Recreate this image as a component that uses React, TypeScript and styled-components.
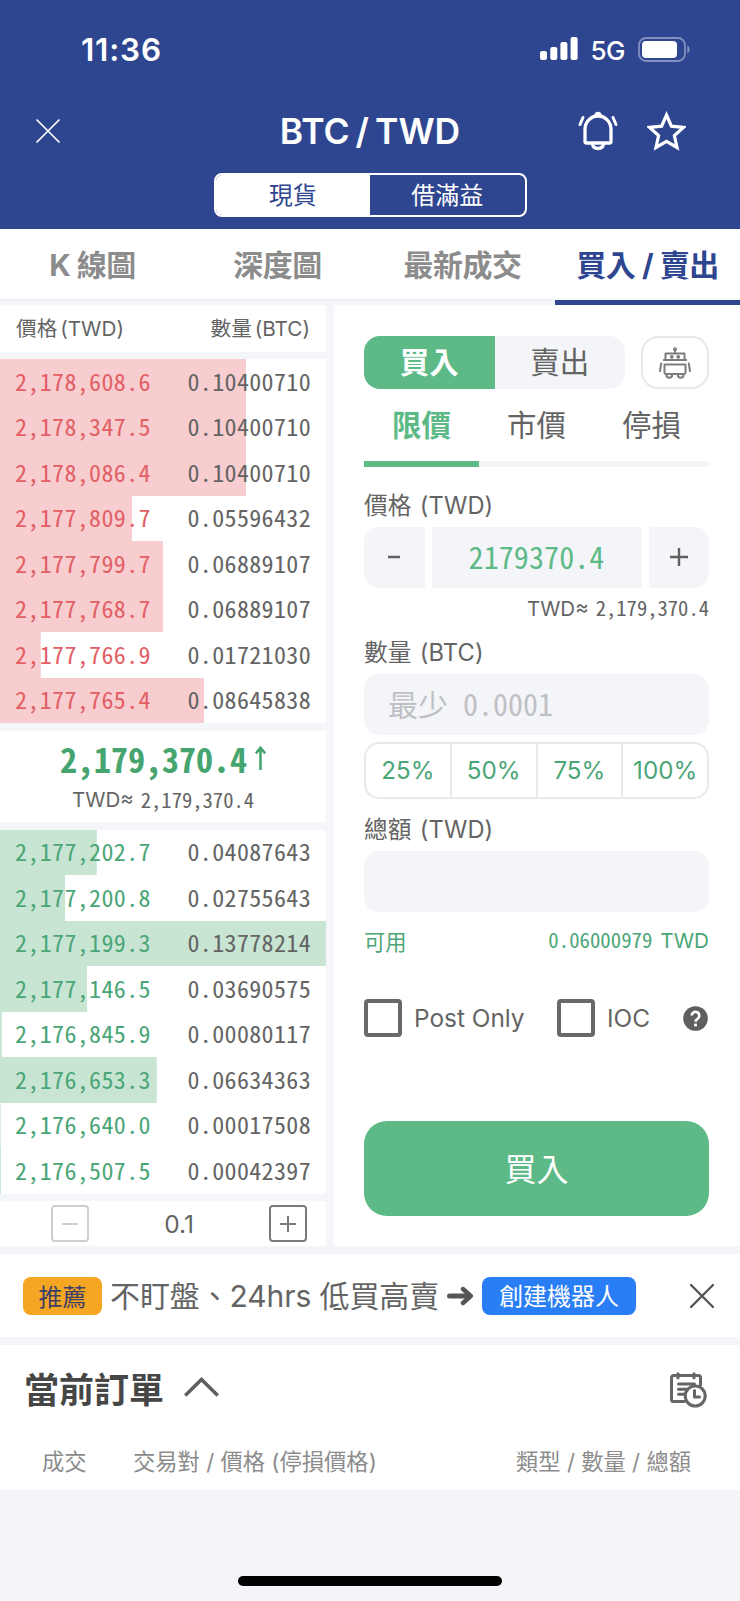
import React from 'react';
import styled, { createGlobalStyle, css } from 'styled-components';

const color = {
  navy: '#2e4690',
  line: '#f4f6f9',
  field: '#f4f5f9',
  text: '#646464',
  muted: '#8c8c8c',
  green: '#5dba87',
  greenText: '#4ba677',
  red: '#e25f66',
  askBar: '#f8cdcf',
  bidBar: '#c8e5d3',
};

const sans = '"Inter", "Noto Sans CJK TC", sans-serif';

const GlobalStyle = createGlobalStyle`
  * { box-sizing: border-box; }
  body { margin: 0; background: #f3f5f9; font-family: ${sans}; color: ${color.text}; }
  button { font: inherit; color: inherit; background: none; border: 0; padding: 0; margin: 0; }
  svg { display: block; flex: none; }
`;

const Screen = styled.main`
  width: 740px;
  height: 1601px;
  display: flex;
  flex-direction: column;
  background: #f3f5f9;
  overflow: hidden;
  white-space: nowrap;
`;

/* Half-width figures keep the price columns aligned */
const Figures = styled.span<{ $size: number; $tone?: string; $weight?: number; $spacing?: number }>`
  font-family: 'Noto Sans CJK TC', monospace;
  font-feature-settings: 'hwid';
  font-size: ${p => p.$size}px;
  line-height: ${p => p.$size}px;
  font-weight: ${p => p.$weight ?? 400};
  letter-spacing: ${p => p.$spacing ?? 0}px;
  color: ${p => p.$tone ?? 'inherit'};
  padding-bottom: ${p => p.$size * 0.09}px;
`;

/* ---------- header ---------- */

const Header = styled.header`
  height: 229px;
  flex: none;
  background: ${color.navy};
  color: #fff;
  display: flex;
  flex-direction: column;
  align-items: center;
`;

const StatusBar = styled.div`
  width: 100%;
  height: 100px;
  padding: 0 50px 2px 81px;
  display: flex;
  align-items: center;
  justify-content: space-between;
`;

const Clock = styled.span`
  font-size: 31.5px;
  font-weight: 600;
  letter-spacing: 0.8px;
`;

const StatusIcons = styled.div`
  display: flex;
  align-items: center;
`;

const Network = styled.span`
  font-size: 26px;
  font-weight: 500;
  letter-spacing: -0.5px;
  margin: 2px 13px 0 12px;
`;

const TitleBar = styled.div`
  width: 100%;
  height: 62px;
  padding: 0 54px 0 36px;
  display: grid;
  grid-template-columns: 1fr auto 1fr;
  align-items: center;
`;

const Title = styled.h1`
  margin: 0;
  font-size: 35.5px;
  font-weight: 600;
  letter-spacing: 0;
  word-spacing: -3px;
  padding-left: 18px;
`;

const TitleActions = styled.div`
  display: flex;
  justify-content: flex-end;
  gap: 29px;
`;

const MarketSwitch = styled.div`
  width: 313px;
  height: 44px;
  margin-top: 11px;
  display: flex;
  border: 2px solid #fff;
  border-radius: 8px;
  overflow: hidden;
`;

const MarketOption = styled.button<{ $active?: boolean }>`
  flex: 1;
  font-size: 24px;
  padding-bottom: 4px;
  background: ${p => (p.$active ? '#fff' : 'transparent')};
  color: ${p => (p.$active ? color.navy : '#fff')};
`;

/* ---------- page tabs ---------- */

const Tabs = styled.nav`
  height: 76px;
  flex: none;
  display: flex;
  background: linear-gradient(#fff 69px, #eeeff2 71px, ${color.line} 73px);
`;

const Tab = styled.button<{ $active?: boolean }>`
  flex: 1;
  font-size: 30px;
  font-weight: 700;
  padding-bottom: ${p => (p.$active ? 3 : 8)}px;
  letter-spacing: -0.5px;
  color: ${p => (p.$active ? color.navy : color.muted)};
  border-bottom: ${p => (p.$active ? `5px solid ${color.navy}` : '0')};
`;

/* ---------- order book ---------- */

const Trading = styled.div`
  height: 941px;
  flex: none;
  display: flex;
  gap: 8px;
  background: ${color.line};
`;

const Book = styled.section`
  width: 326px;
  flex: none;
  display: flex;
  flex-direction: column;
  gap: 7.5px;
`;

const BookHead = styled.div`
  height: 46.5px;
  display: flex;
  justify-content: space-between;
  align-items: center;
  padding: 0 16px 2px;
  background: #fff;
  font-size: 20.7px;
  word-spacing: -3px;
`;

const Levels = styled.div`
  height: 364px;
  display: flex;
  flex-direction: column;
  background: #fff;
`;

const Level = styled.div.attrs<{ $depth: number; $side: 'ask' | 'bid' }>(p => ({
  style: { backgroundSize: `${p.$depth}% 100%` },
}))<{ $depth: number; $side: 'ask' | 'bid' }>`
  flex: 1;
  display: flex;
  justify-content: space-between;
  align-items: center;
  padding: 0 15px;
  background-image: ${p => {
    const bar = p.$side === 'ask' ? color.askBar : color.bidBar;
    return `linear-gradient(${bar}, ${bar})`;
  }};
  background-repeat: no-repeat;
`;

const LastPrice = styled.div`
  height: 91.5px;
  background: #fff;
  display: flex;
  flex-direction: column;
  align-items: center;
  padding-top: 12.5px;
`;

const PriceLine = styled.div`
  display: flex;
  align-items: center;
  gap: 8px;
  height: 35px;
`;

const RiseArrow = styled.svg`
  margin-bottom: 5px;
`;

const Approx = styled.div`
  display: flex;
  align-items: center;
  font-size: 20.5px;
  line-height: 24px;
  height: 24px;
  gap: 7px;
`;

const LastApprox = styled(Approx)`
  margin-top: 10px;
`;

const Precision = styled.div`
  flex: 1;
  background: #fff;
  display: flex;
  align-items: center;
  justify-content: space-between;
  padding: 0 19px 0 51px;
  font-size: 24.5px;
`;

const StepBox = styled.button<{ $disabled?: boolean }>`
  width: 38px;
  height: 37px;
  display: grid;
  place-items: center;
  border: 2px solid currentColor;
  border-radius: 4px;
  color: ${p => (p.$disabled ? '#cfcfcf' : '#7a7a7a')};
`;

/* ---------- order form ---------- */

const Form = styled.section`
  flex: 1;
  background: #fff;
  padding: 31px 31px 30px 30px;
  display: flex;
  flex-direction: column;
`;

const SideRow = styled.div`
  display: flex;
  justify-content: space-between;
  height: 53px;
`;

const SideSwitch = styled.div`
  width: 261px;
  display: flex;
  border-radius: 16px;
  overflow: hidden;
  background: ${color.field};
`;

const SideOption = styled.button<{ $active?: boolean }>`
  flex: 1;
  font-size: 29.5px;
  padding-bottom: 5px;
  ${p =>
    p.$active &&
    css`
      background: ${color.green};
      color: #fff;
      font-weight: 700;
    `}
`;

const BotButton = styled.button`
  width: 68px;
  border: 2px solid #e8e8ea;
  border-radius: 17px;
  display: grid;
  place-items: center;
`;

const TypeTabs = styled.div`
  height: 78px;
  display: flex;
  background: linear-gradient(${color.field}, ${color.field}) bottom / 100% 6px no-repeat;
`;

const TypeTab = styled.button<{ $active?: boolean }>`
  flex: 1;
  font-size: 29.5px;
  border-bottom: 6px solid ${p => (p.$active ? color.green : 'transparent')};
  color: ${p => (p.$active ? color.green : color.text)};
  font-weight: ${p => (p.$active ? 700 : 400)};
  padding-bottom: 5px;
`;

const Label = styled.div<{ $top: number; $bottom: number }>`
  font-size: 23.7px;
  line-height: 30px;
  letter-spacing: 0.1px;
  word-spacing: 1.5px;
  margin: ${p => p.$top}px 0 ${p => p.$bottom}px;
`;

const Stepper = styled.div`
  height: 61px;
  display: grid;
  grid-template-columns: 60.5px 1fr 60.5px;
  gap: 7px;
  border-radius: 15px;
  overflow: hidden;
`;

const StepperCell = styled.div`
  display: grid;
  place-items: center;
  background: ${color.field};
`;

const FormApprox = styled(Approx)`
  justify-content: flex-end;
  margin-top: 9px;
`;

const Field = styled.div`
  height: 60.5px;
  border-radius: 15px;
  background: ${color.field};
  padding: 0 24px;
  display: flex;
  align-items: center;
`;

const Percents = styled.div`
  height: 57px;
  margin-top: 7px;
  display: flex;
  border: 2px solid #e9e9eb;
  border-radius: 15px;
`;

const Percent = styled.button`
  flex: 1;
  font-size: 24.2px;
  color: ${color.greenText};
  & + & {
    border-left: 2px solid #e9e9eb;
  }
`;

const Available = styled.div`
  display: flex;
  justify-content: space-between;
  align-items: center;
  height: 30px;
  margin-top: 13.5px;
  color: ${color.greenText};
  font-size: 21.3px;
`;

const Balance = styled.span`
  display: flex;
  align-items: center;
  gap: 8px;
  font-size: 20.7px;
`;

const Options = styled.div`
  display: flex;
  align-items: center;
  height: 38px;
  margin-top: 44px;
  font-size: 24.4px;
`;

const CheckBox = styled.span`
  width: 38px;
  height: 38px;
  border: 4px solid #696969;
  border-radius: 4px;
  margin-right: 12px;
`;

const OptionLabel = styled.span<{ $spacing: number; $width: number }>`
  letter-spacing: ${p => p.$spacing}px;
  width: ${p => p.$width}px;
`;

const Submit = styled.button`
  margin-top: auto;
  height: 95px;
  padding-bottom: 4px;
  border-radius: 23px;
  background: ${color.green};
  color: #fff;
  font-size: 32px;
`;

/* ---------- promo strip ---------- */

const Promo = styled.section`
  margin-top: 8px;
  height: 83px;
  flex: none;
  padding: 0 26px 0 23px;
  display: flex;
  align-items: center;
  background: #fff;
`;

const Badge = styled.span`
  width: 79px;
  height: 38px;
  border-radius: 8px;
  background: #f5a623;
  color: #3d3f66;
  font-size: 24px;
  line-height: 42px;
  text-align: center;
  margin-right: 8px;
`;

const PromoText = styled.span`
  font-size: 30px;
  letter-spacing: -0.1px;
  margin-right: 8px;
  padding-bottom: 4px;
`;

const PromoButton = styled.button`
  width: 154px;
  height: 38px;
  margin: 0 auto 0 8px;
  padding-bottom: 2px;
  border-radius: 8px;
  background: #2a7ef5;
  color: #fff;
  font-size: 24px;
`;

/* ---------- open orders ---------- */

const Orders = styled.section`
  margin-top: 8px;
  height: 145px;
  flex: none;
  background: #fff;
`;

const OrdersHead = styled.div`
  height: 90px;
  padding: 0 33px 0 24px;
  display: flex;
  align-items: center;
`;

const OrdersTitle = styled.h2`
  margin: 0 20px 0 0;
  font-size: 35px;
  line-height: 40px;
  font-weight: 700;
  color: #464646;
`;

const Chevron = styled.svg`
  margin-bottom: 6px;
`;

const HistoryIcon = styled.svg`
  margin-left: auto;
`;

const Columns = styled.div`
  height: 55px;
  padding: 0 49px 5px 42px;
  display: grid;
  grid-template-columns: 91px 1fr auto;
  align-items: center;
  font-size: 22.3px;
  color: ${color.muted};
`;

const HomeIndicator = styled.div`
  width: 264px;
  height: 10px;
  border-radius: 5px;
  background: #000;
  margin: auto auto 15px;
`;

type Row = [price: string, amount: string, depth: number];

const asks: Row[] = [
  ['2,178,608.6', '0.10400710', 75.5],
  ['2,178,347.5', '0.10400710', 75.5],
  ['2,178,086.4', '0.10400710', 75.5],
  ['2,177,809.7', '0.05596432', 40.6],
  ['2,177,799.7', '0.06889107', 50],
  ['2,177,768.7', '0.06889107', 50],
  ['2,177,766.9', '0.01721030', 12.5],
  ['2,177,765.4', '0.08645838', 62.7],
];

const bids: Row[] = [
  ['2,177,202.7', '0.04087643', 29.7],
  ['2,177,200.8', '0.02755643', 20],
  ['2,177,199.3', '0.13778214', 100],
  ['2,177,146.5', '0.03690575', 26.8],
  ['2,176,845.9', '0.00080117', 0.6],
  ['2,176,653.3', '0.06634363', 48.1],
  ['2,176,640.0', '0.00017508', 0.2],
  ['2,176,507.5', '0.00042397', 0.3],
];

function Ladder({ rows, side }: { rows: Row[]; side: 'ask' | 'bid' }) {
  return (
    <Levels>
      {rows.map(([price, amount, depth]) => (
        <Level key={price} $depth={depth} $side={side}>
          <Figures $size={24} $spacing={0.35} $tone={side === 'ask' ? color.red : color.greenText}>
            {price}
          </Figures>
          <Figures $size={24} $spacing={0.35}>
            {amount}
          </Figures>
        </Level>
      ))}
    </Levels>
  );
}

function Cross({ size, stroke, width }: { size: number; stroke: string; width: number }) {
  return (
    <svg width={size} height={size} viewBox="0 0 24 24" stroke={stroke} strokeWidth={width} strokeLinecap="round">
      <path d="M1 1l22 22M23 1L1 23" />
    </svg>
  );
}

export default function App() {
  return (
    <Screen>
      <GlobalStyle />
      <Header>
        <StatusBar>
          <Clock>11:36</Clock>
          <StatusIcons>
            <svg width="38" height="24" viewBox="0 0 38 24" fill="#fff">
              <rect x="0" y="14" width="7" height="9" rx="2" />
              <rect x="10.3" y="10" width="7" height="13" rx="2" />
              <rect x="20.4" y="5" width="7" height="18" rx="2" />
              <rect x="30.6" y="0" width="7" height="23" rx="2" />
            </svg>
            <Network>5G</Network>
            <svg width="52" height="25" viewBox="0 0 52 25">
              <rect x="1" y="1" width="46" height="23" rx="7" fill="none" stroke="#8391c1" strokeWidth="1.8" />
              <rect x="4" y="4" width="35" height="17" rx="4" fill="#fff" />
              <path d="M49.3 8.5c3 1.2 3 6.8 0 8z" fill="#8391c1" />
            </svg>
          </StatusIcons>
        </StatusBar>
        <TitleBar>
          <Cross size={24} stroke="#fff" width={1.7} />
          <Title>BTC / TWD</Title>
          <TitleActions>
            <svg width="40" height="40" viewBox="0 0 40 40" fill="none" stroke="#fff" strokeWidth="3.3" strokeLinecap="round" strokeLinejoin="round">
              <path d="M7 30.500V18.500a13 13.500 0 0 1 26 0v12a1.500 1.500 0 0 1-1.500 1.500H8.500a1.500 1.500 0 0 1-1.500-1.500z" />
              <path d="M14.500 33c.8 6 10.200 6 11 0" />
              <path d="M18 4c.5-2 3.500-2 4 0" />
              <path d="M5 6.500L2 13.500M35 6.500l3 7" strokeWidth="3" />
            </svg>
            <svg width="39" height="40" viewBox="0 0 39 40" fill="none" stroke="#fff" strokeWidth="3.2">
              <path d="M19.500 4l4.900 11.200 12 1.200-9 8.100 2.600 12-10.500-6.200-10.500 6.200 2.600-12-9-8.100 12-1.200z" />
            </svg>
          </TitleActions>
        </TitleBar>
        <MarketSwitch>
          <MarketOption $active>現貨</MarketOption>
          <MarketOption>借滿益</MarketOption>
        </MarketSwitch>
      </Header>

      <Tabs>
        <Tab>K 線圖</Tab>
        <Tab>深度圖</Tab>
        <Tab>最新成交</Tab>
        <Tab $active>買入 / 賣出</Tab>
      </Tabs>

      <Trading>
        <Book>
          <BookHead>
            <span>價格 (TWD)</span>
            <span>數量 (BTC)</span>
          </BookHead>
          <Ladder rows={asks} side="ask" />
          <LastPrice>
            <PriceLine>
              <Figures $size={34} $weight={700} $tone="#46a56f">
                2,179,370.4
              </Figures>
              <RiseArrow width="11" height="24" viewBox="0 0 11 24" fill="none" stroke="#46a56f" strokeWidth="2.600">
                <path d="M5.500 24V2M.8 7.500L5.500 1.800l4.700 5.700" />
              </RiseArrow>
            </PriceLine>
            <LastApprox>
              <span>TWD≈</span>
              <Figures $size={20.6}>2,179,370.4</Figures>
            </LastApprox>
          </LastPrice>
          <Ladder rows={bids} side="bid" />
          <Precision>
            <StepBox $disabled>
              <svg width="16" height="16" viewBox="0 0 16 16" stroke="currentColor" strokeWidth="2">
                <path d="M0 8h16" />
              </svg>
            </StepBox>
            <span>0.1</span>
            <StepBox>
              <svg width="16" height="16" viewBox="0 0 16 16" stroke="currentColor" strokeWidth="2">
                <path d="M0 8h16M8 0v16" />
              </svg>
            </StepBox>
          </Precision>
        </Book>

        <Form>
          <SideRow>
            <SideSwitch>
              <SideOption $active>買入</SideOption>
              <SideOption>賣出</SideOption>
            </SideSwitch>
            <BotButton>
              <svg width="32" height="32" viewBox="0 0 32 32" fill="none" stroke="#7d7d7d" strokeWidth="2" strokeLinecap="round" strokeLinejoin="round">
                <circle cx="16" cy="2.200" r="1" />
                <path d="M16 3.500v2.500M6.500 6.500h19v6.500h-19zM4.800 13h22.400" />
                <path d="M5.500 17.500h21v8a1.500 1.500 0 0 1-1.500 1.500h-18a1.500 1.500 0 0 1-1.500-1.500z" />
                <path d="M7.500 28a2.800 2.800 0 0 0 5.600 0M18.900 28a2.800 2.800 0 0 0 5.600 0" />
                <path d="M2.200 16.500l-1.200 7.500M29.800 16.500l1.200 7.500" />
                <circle cx="12.800" cy="9.800" r=".9" fill="#7d7d7d" />
                <circle cx="19.200" cy="9.800" r=".9" fill="#7d7d7d" />
              </svg>
            </BotButton>
          </SideRow>

          <TypeTabs>
            <TypeTab $active>限價</TypeTab>
            <TypeTab>市價</TypeTab>
            <TypeTab>停損</TypeTab>
          </TypeTabs>

          <Label $top={23.5} $bottom={6}>價格 (TWD)</Label>
          <Stepper>
            <StepperCell>
              <svg width="12" height="4" viewBox="0 0 12 4" stroke="#606060" strokeWidth="2.600">
                <path d="M0 2h12" />
              </svg>
            </StepperCell>
            <StepperCell>
              <Figures $size={30} $spacing={0.1} $tone={color.green}>2179370.4</Figures>
            </StepperCell>
            <StepperCell>
              <svg width="18" height="18" viewBox="0 0 18 18" stroke="#606060" strokeWidth="2.400">
                <path d="M0 9h18M9 0v18" />
              </svg>
            </StepperCell>
          </Stepper>
          <FormApprox>
            <span>TWD≈</span>
            <Figures $size={20.6}>2,179,370.4</Figures>
          </FormApprox>

          <Label $top={17.5} $bottom={6}>數量 (BTC)</Label>
          <Field>
            <Figures $size={30} $tone="#bfc0c4">最少 0.0001</Figures>
          </Field>
          <Percents>
            <Percent>25%</Percent>
            <Percent>50%</Percent>
            <Percent>75%</Percent>
            <Percent>100%</Percent>
          </Percents>

          <Label $top={16} $bottom={6.5}>總額 (TWD)</Label>
          <Field />
          <Available>
            <span>可用</span>
            <Balance>
              <Figures $size={20.8}>0.06000979</Figures>
              <span>TWD</span>
            </Balance>
          </Available>

          <Options>
            <CheckBox />
            <OptionLabel $spacing={0} $width={143}>Post Only</OptionLabel>
            <CheckBox />
            <OptionLabel $spacing={0} $width={76}>IOC</OptionLabel>
            <svg width="25" height="25" viewBox="0 0 25 25">
              <circle cx="12.500" cy="12.500" r="12.300" fill="#5f5f5f" />
              <path d="M8.700 9.600a3.800 3.800 0 1 1 5.800 3.200c-1.300.8-2 1.400-2 3" fill="none" stroke="#fff" strokeWidth="2.600" />
              <rect x="11.100" y="17.600" width="2.800" height="2.800" fill="#fff" />
            </svg>
          </Options>

          <Submit>買入</Submit>
        </Form>
      </Trading>

      <Promo>
        <Badge>推薦</Badge>
        <PromoText>不盯盤、24hrs 低買高賣</PromoText>
        <svg width="27" height="20" viewBox="0 0 27 20" fill="none" stroke="#555" strokeWidth="5" strokeLinecap="round" strokeLinejoin="round">
          <path d="M2.500 10h20" />
          <path d="M16 3l7.800 7-7.800 7" strokeWidth="4.400" />
        </svg>
        <PromoButton>創建機器人</PromoButton>
        <Cross size={24} stroke="#555" width={2.400} />
      </Promo>

      <Orders>
        <OrdersHead>
          <OrdersTitle>當前訂單</OrdersTitle>
          <Chevron width="35" height="20" viewBox="0 0 35 20" fill="none" stroke="#606060" strokeWidth="3.600">
            <path d="M1.200 18.500L17.500 2.500 33.800 18.500" />
          </Chevron>
          <HistoryIcon width="37" height="36" viewBox="0 0 37 36" fill="none" stroke="#666" strokeWidth="3" strokeLinecap="round" strokeLinejoin="round">
            <path d="M14.500 29.500H3.500a2 2 0 0 1-2-2V5.500a2 2 0 0 1 2-2h25a2 2 0 0 1 2 2V13" />
            <path d="M8 1.800v4M24 1.800v4" strokeWidth="3.200" />
            <path d="M8.500 12h16M8.500 17.200h9M8.500 22.300h6" />
            <circle cx="25.200" cy="24" r="10" fill="#fff" />
            <path d="M24.500 18.500v6.500h5" />
          </HistoryIcon>
        </OrdersHead>
        <Columns>
          <span>成交</span>
          <span>交易對 / 價格 (停損價格)</span>
          <span>類型 / 數量 / 總額</span>
        </Columns>
      </Orders>

      <HomeIndicator />
    </Screen>
  );
}
